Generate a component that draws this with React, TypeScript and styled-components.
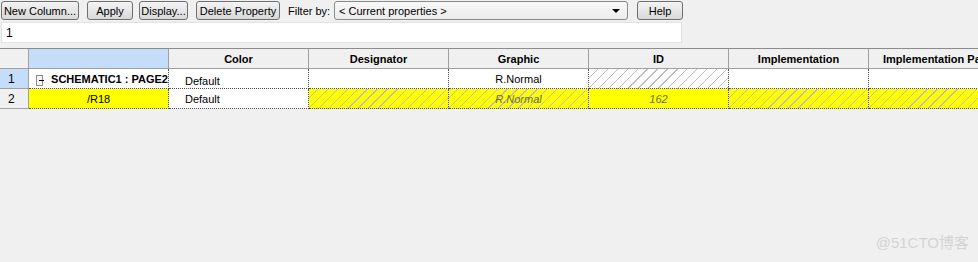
import styled, { createGlobalStyle, css } from 'styled-components';

const GlobalStyle = createGlobalStyle`
  html, body {
    margin: 0;
    padding: 0;
    background: #f0f0f0;
  }
  #root {
    width: 978px;
    height: 262px;
    overflow: hidden;
    position: relative;
  }
`;

const Page = styled.div`
  width: 978px;
  height: 262px;
  overflow: hidden;
  display: flex;
  flex-direction: column;
  font-family: "Liberation Sans", Arial, sans-serif;
  font-size: 11px;
  color: #000;
`;

const Toolbar = styled.div`
  display: flex;
  align-items: center;
  height: 19px;
  padding: 1px 0 0 1px;
`;

const Button = styled.button<{ $w: number; $gap: number }>`
  box-sizing: border-box;
  flex-shrink: 0;
  width: ${(p) => p.$w}px;
  height: 19px;
  margin-right: ${(p) => p.$gap}px;
  padding: 0;
  border: 1px solid #707070;
  border-radius: 3px;
  background: linear-gradient(#f4f4f4, #e6e6e6 50%, #d8d8d8);
  font-family: "Liberation Sans", Arial, sans-serif;
  font-size: 11px;
  color: #000;
  text-align: center;
  line-height: 16px;
`;

const FilterLabel = styled.span`
  flex-shrink: 0;
  width: 46px;
  margin-left: 8px;
  white-space: nowrap;
`;

const Select = styled.div`
  box-sizing: border-box;
  flex-shrink: 0;
  width: 294px;
  height: 19px;
  margin-right: 9px;
  border: 1px solid #8a8a8a;
  border-radius: 3px;
  background: linear-gradient(#f8f8f8, #ececec);
  display: flex;
  align-items: center;
  justify-content: space-between;
  padding: 0 7px 0 4px;
`;

const Arrow = styled.span`
  width: 0;
  height: 0;
  border-left: 4px solid transparent;
  border-right: 4px solid transparent;
  border-top: 4px solid #000;
`;

const InputRow = styled.div`
  padding: 2px 0 0 1px;
  height: 26px;
`;

const TextInput = styled.div`
  box-sizing: border-box;
  width: 681px;
  height: 21px;
  background: #fff;
  border: 1px solid #e2e2e2;
  padding: 3px 0 0 4px;
  font-size: 12px;
`;

const Grid = styled.div`
  display: grid;
  grid-template-columns: 29px repeat(7, 140px);
  grid-auto-rows: 20px;
  border-top: 1px solid #8c8c8c;
`;

const hatch = (base: string) => css`
  background-color: ${base};
  background-image: repeating-linear-gradient(
    135deg,
    transparent 0 6px,
    #bdbdbd 6px 7px
  );
`;

const HeaderCell = styled.div<{ $selected?: boolean; $left?: boolean }>`
  box-sizing: border-box;
  display: flex;
  align-items: center;
  justify-content: ${(p) => (p.$left ? 'flex-start' : 'center')};
  padding-left: ${(p) => (p.$left ? '14px' : '0')};
  background: ${(p) => (p.$selected ? '#c4defa' : '#f0f0f0')};
  border-right: 1px solid #a0a0a0;
  border-bottom: 1px solid #a0a0a0;
  font-weight: bold;
  white-space: nowrap;
  overflow: hidden;
`;

const RowHeader = styled.div<{ $selected?: boolean }>`
  box-sizing: border-box;
  display: flex;
  align-items: center;
  padding-left: 8px;
  font-size: 12px;
  background: ${(p) => (p.$selected ? '#c4defa' : '#f0f0f0')};
  border-right: 1px solid #a0a0a0;
  border-bottom: 1px solid #a0a0a0;
`;

type Fill = 'white' | 'yellow' | 'hatch' | 'yellowHatch';

const Cell = styled.div<{ $fill: Fill; $left?: boolean; $italic?: boolean; $bold?: boolean }>`
  box-sizing: border-box;
  display: flex;
  align-items: center;
  justify-content: ${(p) => (p.$left ? 'flex-start' : 'center')};
  padding-left: ${(p) => (p.$left ? '16px' : '0')};
  border-right: 1px dotted #505050;
  border-bottom: 1px dotted #505050;
  white-space: nowrap;
  overflow: hidden;
  font-style: ${(p) => (p.$italic ? 'italic' : 'normal')};
  font-weight: ${(p) => (p.$bold ? 'bold' : 'normal')};
  color: ${(p) => (p.$italic ? '#6a6a4a' : '#000')};
  ${(p) =>
    p.$fill === 'white'
      ? css`background: #fff;`
      : p.$fill === 'yellow'
      ? css`background: #ffff00;`
      : p.$fill === 'hatch'
      ? hatch('#fff')
      : hatch('#ffff00')}
`;

const NameCell = styled(Cell)`
  justify-content: flex-start;
  padding-left: 7px;
  gap: 8px;
`;

const LowText = styled.span`
  margin-top: 4px;
`;

const Collapse = styled.span`
  box-sizing: border-box;
  width: 11px;
  height: 11px;
  margin-top: 4px;
  border: 1px solid #8c8c8c;
  background: #f4f4f4;
  position: relative;
  &::after {
    content: '';
    position: absolute;
    left: 2px;
    top: 4px;
    width: 5px;
    height: 1px;
    background: #000;
  }
`;

const Watermark = styled.div`
  position: absolute;
  right: 9px;
  bottom: 10px;
  font-family: "Liberation Sans", "Noto Sans CJK SC", sans-serif;
  font-size: 15px;
  color: #d4d4d4;
`;

const columns = ['Color', 'Designator', 'Graphic', 'ID', 'Implementation'];

export default function App() {
  return (
    <>
      <GlobalStyle />
      <Page>
        <Toolbar>
          <Button $w={78} $gap={8}>New Column...</Button>
          <Button $w={46} $gap={6}>Apply</Button>
          <Button $w={49} $gap={8}>Display...</Button>
          <Button $w={84} $gap={0}>Delete Property</Button>
          <FilterLabel>Filter by:</FilterLabel>
          <Select>
            <span>&lt; Current properties &gt;</span>
            <Arrow />
          </Select>
          <Button $w={46} $gap={0}>Help</Button>
        </Toolbar>
        <InputRow>
          <TextInput>1</TextInput>
        </InputRow>
        <Grid>
          <HeaderCell />
          <HeaderCell $selected />
          {columns.map((c) => (
            <HeaderCell key={c}>{c}</HeaderCell>
          ))}
          <HeaderCell $left>Implementation Path</HeaderCell>

          <RowHeader $selected>1</RowHeader>
          <NameCell $fill="white" $bold>
            <Collapse />
            <span>SCHEMATIC1 : PAGE2</span>
          </NameCell>
          <Cell $fill="white" $left>
            <LowText>Default</LowText>
          </Cell>
          <Cell $fill="white" />
          <Cell $fill="white">R.Normal</Cell>
          <Cell $fill="hatch" />
          <Cell $fill="white" />
          <Cell $fill="white" />

          <RowHeader>2</RowHeader>
          <Cell $fill="yellow">/R18</Cell>
          <Cell $fill="white" $left>Default</Cell>
          <Cell $fill="yellowHatch" />
          <Cell $fill="yellowHatch" $italic>R.Normal</Cell>
          <Cell $fill="yellow" $italic>162</Cell>
          <Cell $fill="yellowHatch" />
          <Cell $fill="yellowHatch" />
        </Grid>
        <Watermark>@51CTO博客</Watermark>
      </Page>
    </>
  );
}
